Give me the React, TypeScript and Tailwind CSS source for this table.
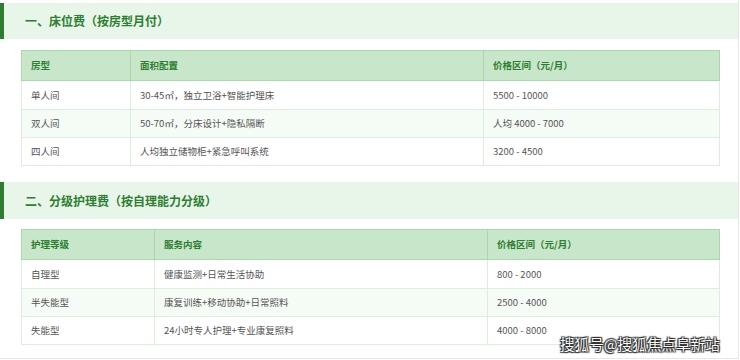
import React from 'react';

type Section = {
  title: string;
  cols: [string, string, string];
  widths: [string, string, string];
  rows: [string, string, string][];
};

const sections: Section[] = [
  {
    title: '一、床位费（按房型月付）',
    cols: ['房型', '面积配置', '价格区间（元/月）'],
    widths: ['w-[109px]', 'w-[353px]', 'w-[236px]'],
    rows: [
      ['单人间', '30-45㎡，独立卫浴+智能护理床', '5500 - 10000'],
      ['双人间', '50-70㎡，分床设计+隐私隔断', '人均 4000 - 7000'],
      ['四人间', '人均独立储物柜+紧急呼叫系统', '3200 - 4500'],
    ],
  },
  {
    title: '二、分级护理费（按自理能力分级）',
    cols: ['护理等级', '服务内容', '价格区间（元/月）'],
    widths: ['w-[133px]', 'w-[333px]', 'w-[232px]'],
    rows: [
      ['自理型', '健康监测+日常生活协助', '800 - 2000'],
      ['半失能型', '康复训练+移动协助+日常照料', '2500 - 4000'],
      ['失能型', '24小时专人护理+专业康复照料', '4000 - 8000'],
    ],
  },
];

const FeeTable: React.FC<{ s: Section }> = ({ s }) => (
  <table className="ml-[21px] w-[698px] table-fixed border-collapse border border-[#d6ecd7] text-[9.5px]">
    <thead>
      <tr className="h-[30px] bg-[#c8e6c9]">
        {s.cols.map((c, i) => (
          <th
            key={i}
            className={`${s.widths[i]} border border-[#a9d8ab] px-[9px] text-left font-bold text-[#2e7d32]`}
          >
            {c}
          </th>
        ))}
      </tr>
    </thead>
    <tbody>
      {s.rows.map((r, ri) => (
        <tr key={ri} className={`${ri === 0 ? 'h-[29px]' : 'h-[28px]'} ${ri === 1 ? 'bg-[#f5fbf5]' : 'bg-white'}`}>
          {r.map((c, ci) => (
            <td key={ci} className="border border-[#dcefdd] px-[9px] text-[#555]">
              {c}
            </td>
          ))}
        </tr>
      ))}
    </tbody>
  </table>
);

export default function App() {
  return (
    <div
      className="relative h-[360px] w-[740px] overflow-hidden bg-white"
      style={{ fontFamily: '"Noto Sans CJK SC", "Noto Sans", sans-serif' }}
    >
      <div className="h-[359px] w-[739px] border-b border-r border-[#e6e6e6] pt-[3px]">
        <div className="flex h-[36px] items-center border-l-4 border-[#2e7d32] bg-[#e8f5e9] pl-[21px] text-[12px] font-bold text-[#2e7d32]">
          {sections[0].title}
        </div>
        <div className="mt-[11px]">
          <FeeTable s={sections[0]} />
        </div>
        <div className="mt-[16px] flex h-[37px] items-center border-l-4 border-[#2e7d32] bg-[#e8f5e9] pl-[21px] text-[12px] font-bold text-[#2e7d32]">
          {sections[1].title}
        </div>
        <div className="mt-[10px]">
          <FeeTable s={sections[1]} />
        </div>
      </div>
      <div
        className="absolute left-[560px] top-[334px] text-[14.6px] leading-[20px] text-white"
        style={{ textShadow: '0 0 1px #000, 1px 1px 1px #333, -1px -1px 1px #333, 1px -1px 1px #333, -1px 1px 1px #333' }}
      >
        搜狐号@搜狐焦点阜新站
      </div>
    </div>
  );
}
